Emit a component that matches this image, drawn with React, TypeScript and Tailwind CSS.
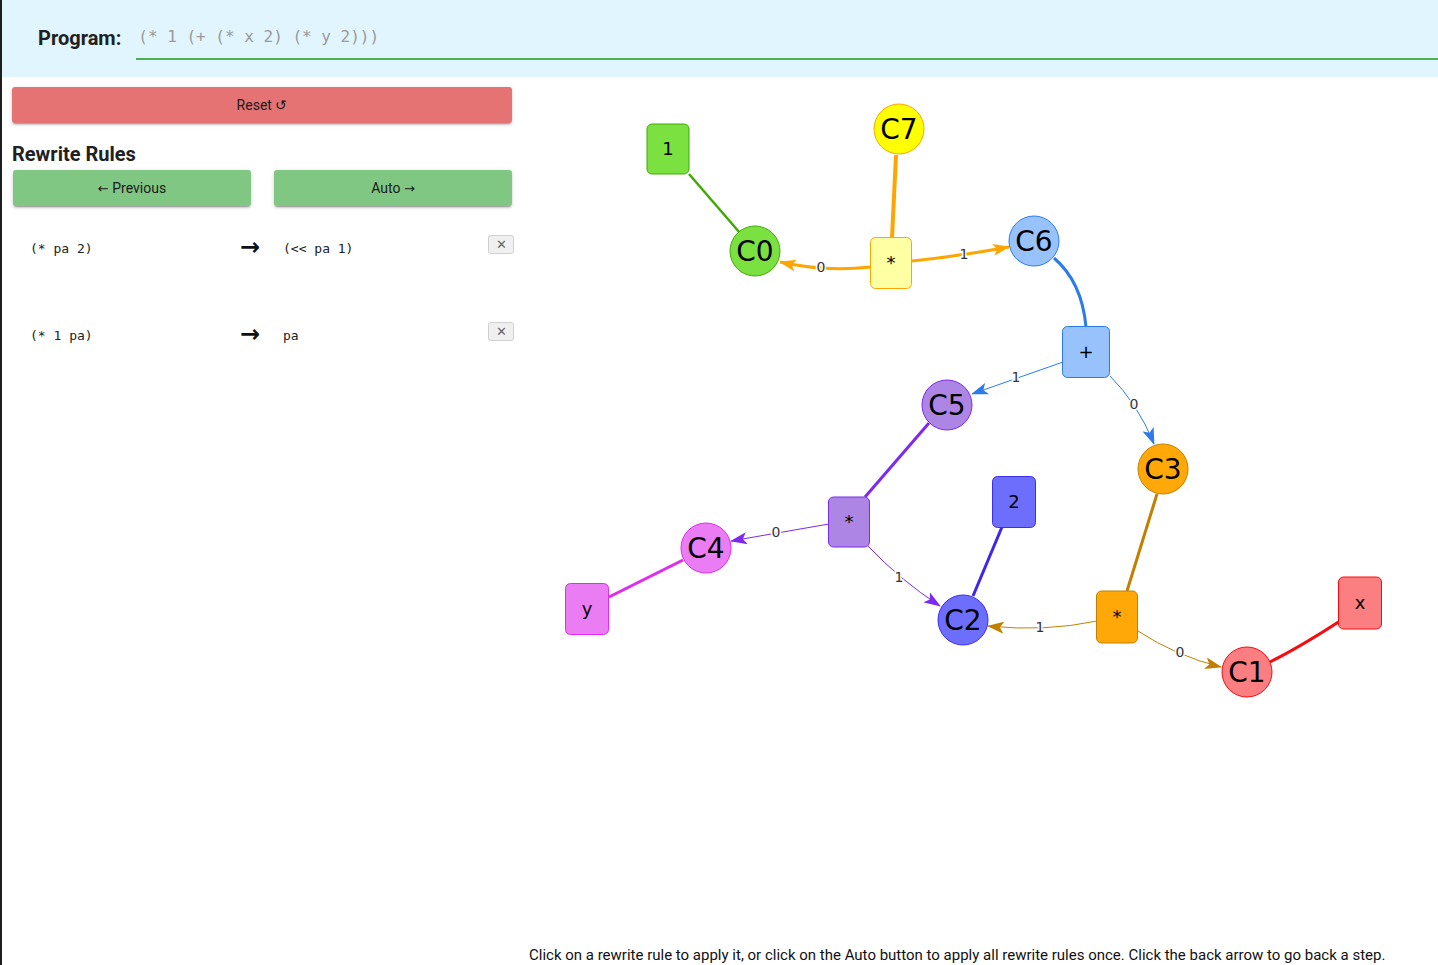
import React from 'react';

const shadow = 'shadow-[0px_3px_1px_-2px_rgba(0,0,0,0.2),0px_2px_2px_0px_rgba(0,0,0,0.14),0px_1px_5px_0px_rgba(0,0,0,0.12)]';

type GNode = { id: string; label: string; x: number; y: number; shape: 'circle' | 'box'; fill: string; stroke: string; w?: number; h?: number };

const nodes: GNode[] = [
    { id: 'n1', label: '1', x: 668, y: 149, shape: 'box', fill: '#7BE141', stroke: '#41A906', w: 42, h: 50 },
    { id: 'c7', label: 'C7', x: 899, y: 129, shape: 'circle', fill: '#FFFF00', stroke: '#FFA500' },
    { id: 'c0', label: 'C0', x: 755, y: 251, shape: 'circle', fill: '#7BE141', stroke: '#41A906' },
    { id: 'my', label: '*', x: 891, y: 263, shape: 'box', fill: '#FFFFA3', stroke: '#FFA500', w: 41, h: 51 },
    { id: 'c6', label: 'C6', x: 1034, y: 241, shape: 'circle', fill: '#97C2FC', stroke: '#2B7CE9' },
    { id: 'pl', label: '+', x: 1086, y: 352, shape: 'box', fill: '#97C2FC', stroke: '#2B7CE9', w: 47, h: 51 },
    { id: 'c5', label: 'C5', x: 947, y: 405, shape: 'circle', fill: '#AD85E4', stroke: '#7C29F0' },
    { id: 'c3', label: 'C3', x: 1163, y: 469, shape: 'circle', fill: '#FFA807', stroke: '#C37F00' },
    { id: 'n2', label: '2', x: 1014, y: 502, shape: 'box', fill: '#6E6EFD', stroke: '#3d2df0', w: 43, h: 51 },
    { id: 'mp', label: '*', x: 849, y: 522, shape: 'box', fill: '#AD85E4', stroke: '#7C29F0', w: 41, h: 50 },
    { id: 'c4', label: 'C4', x: 706, y: 548, shape: 'circle', fill: '#EB7DF4', stroke: '#E129F0' },
    { id: 'ny', label: 'y', x: 587, y: 609, shape: 'box', fill: '#EB7DF4', stroke: '#E129F0', w: 43, h: 51 },
    { id: 'c2', label: 'C2', x: 963, y: 620, shape: 'circle', fill: '#6E6EFD', stroke: '#3d2df0' },
    { id: 'mo', label: '*', x: 1117, y: 617, shape: 'box', fill: '#FFA807', stroke: '#C37F00', w: 41, h: 52 },
    { id: 'c1', label: 'C1', x: 1247, y: 672, shape: 'circle', fill: '#FB7E81', stroke: '#FA0A10' },
    { id: 'nx', label: 'x', x: 1360, y: 603, shape: 'box', fill: '#FB7E81', stroke: '#FA0A10', w: 43, h: 52 },
];

type GEdge = { d: string; color: string; width: number; arrow?: string; label?: string; lx?: number; ly?: number };

const edges: GEdge[] = [
    { d: 'M689,174 L740,233', color: '#41A906', width: 2.5 },
    { d: 'M896,155 L892,238', color: '#FFA500', width: 4 },
    { d: 'M1054,258 Q1082,282 1086,327', color: '#2B7CE9', width: 3 },
    { d: 'M929,423 L865,497', color: '#7C29F0', width: 3 },
    { d: 'M1002,527 L973,596', color: '#3d24f0', width: 3 },
    { d: 'M1157,494 L1127,591', color: '#C37F00', width: 3 },
    { d: 'M609,597 L683,560', color: '#E129F0', width: 3 },
    { d: 'M1340,621 Q1300,647 1270,662', color: '#FA0A10', width: 3 },
    { d: 'M871,267 Q824,272 780,262', color: '#FFA500', width: 3, arrow: 'ao', label: '0', lx: 821, ly: 267 },
    { d: 'M912,261 Q960,256 1009,247', color: '#FFA500', width: 3, arrow: 'ao', label: '1', lx: 964, ly: 254 },
    { d: 'M1063,362 L972,394', color: '#2B7CE9', width: 1, arrow: 'ab', label: '1', lx: 1016, ly: 377 },
    { d: 'M1110,376 Q1138,404 1154,444', color: '#2B7CE9', width: 1, arrow: 'ab', label: '0', lx: 1134, ly: 404 },
    { d: 'M829,524 L731,541', color: '#7C29F0', width: 1, arrow: 'ap', label: '0', lx: 776, ly: 532 },
    { d: 'M868,546 Q900,580 940,606', color: '#7C29F0', width: 1, arrow: 'ap', label: '1', lx: 899, ly: 577 },
    { d: 'M1097,621 Q1045,632 988,626', color: '#C37F00', width: 1, arrow: 'ak', label: '1', lx: 1040, ly: 627 },
    { d: 'M1138,631 Q1176,656 1221,667', color: '#C37F00', width: 1, arrow: 'ak', label: '0', lx: 1180, ly: 652 },
];

const markers: [string, string][] = [['ao', '#FFA500'], ['ab', '#2B7CE9'], ['ap', '#7C29F0'], ['ak', '#C37F00']];

function Graph() {
    return (
        <svg width={926} height={868} viewBox="512 77 926 868" className="block" style={{ fontFamily: '"DejaVu Sans", sans-serif' }}>
            <defs>
                {markers.map(([id, c]) => (
                    <marker key={id} id={id} viewBox="0 0 17 12" refX={16} refY={6} markerWidth={17} markerHeight={12} markerUnits="userSpaceOnUse" orient="auto">
                        <path d="M0,0 L17,6 L0,12 L4,6 Z" fill={c} />
                    </marker>
                ))}
            </defs>
            {edges.map((e, i) => (
                <path key={i} d={e.d} fill="none" stroke={e.color} strokeWidth={e.width} markerEnd={e.arrow ? `url(#${e.arrow})` : undefined} />
            ))}
            {edges.filter(e => e.label).map((e, i) => (
                <text key={i} x={e.lx} y={e.ly} textAnchor="middle" dominantBaseline="central" fontSize={14} fill="#343434" stroke="#ffffff" strokeWidth={3} paintOrder="stroke">
                    {e.label}
                </text>
            ))}
            {nodes.map(n => (
                <g key={n.id}>
                    {n.shape === 'circle' ? (
                        <circle cx={n.x} cy={n.y} r={25} fill={n.fill} stroke={n.stroke} strokeWidth={1} />
                    ) : (
                        <rect x={n.x - (n.w ?? 42) / 2} y={n.y - (n.h ?? 50) / 2} width={n.w} height={n.h} rx={5} fill={n.fill} stroke={n.stroke} strokeWidth={1} />
                    )}
                    <text x={n.x} y={n.shape === 'circle' ? n.y : n.y - 1} textAnchor="middle" dominantBaseline="central" fontSize={n.shape === 'circle' ? 28 : 18} fill="#000">
                        {n.label}
                    </text>
                </g>
            ))}
        </svg>
    );
}

function RuleRow({ from, to }: { from: string; to: string }) {
    return (
        <div className="flex h-[26px] items-center">
            <span className="ml-[18px] mt-[2px] w-[210px] font-['DejaVu_Sans_Mono',monospace] text-[13px] text-[#222]">{from}</span>
            <span className="w-[43px] font-['DejaVu_Sans',sans-serif] text-[24px] font-bold leading-none text-[#111] -mt-[2px]">→</span>
            <span className="mt-[2px] flex-1 font-['DejaVu_Sans_Mono',monospace] text-[13px] text-[#222]">{to}</span>
            <button className="-mr-[2px] h-[19px] w-[26px] self-start rounded-[3px] border border-[#cfcfcf] bg-[#f0f0f0] text-[13px] leading-none text-[#666]">
                ✕
            </button>
        </div>
    );
}

const Arrow = ({ c }: { c: string }) => <span className="font-['DejaVu_Sans',sans-serif] text-[13px]">{c}</span>;

export default function App() {
    return (
        <div className="flex h-screen flex-col overflow-hidden border-l-2 border-[#1e1e1e] bg-white font-['Roboto',sans-serif] text-[#222]">
            {/* Header */}
            <header className="flex h-[77px] shrink-0 items-start bg-[#e1f5fe] pl-9">
                <div className="mt-[26px] text-xl font-bold leading-6 text-[#212121]">Program:</div>
                <div className="ml-[15px] mt-[25px] h-[35px] flex-1 border-b-2 border-[#4caf50]">
                    <span className="pl-[2px] font-['DejaVu_Sans_Mono',monospace] text-[16px] leading-6 text-[#9a9a9a]">(* 1 (+ (* x 2) (* y 2)))</span>
                </div>
            </header>

            <div className="flex min-h-0 flex-1">
                {/* Left panel */}
                <aside className="w-[510px] shrink-0 pl-[10px] pt-[10px]">
                    <button className={`h-9 w-full rounded-[3px] bg-[#e57373] text-sm text-[#1a1a1a] ${shadow}`}>Reset ↺</button>
                    <h2 className="mt-[19px] text-xl font-bold leading-6 text-[#212121]">Rewrite Rules</h2>
                    <div className="mt-1 grid grid-cols-2 gap-[23px] pl-[1px]">
                        <button className={`h-9 rounded-[3px] bg-[#81c784] text-sm text-[#1a1a1a] ${shadow}`}>
                            <Arrow c="←" /> Previous
                        </button>
                        <button className={`h-9 rounded-[3px] bg-[#81c784] text-sm text-[#1a1a1a] ${shadow}`}>
                            Auto <Arrow c="→" />
                        </button>
                    </div>
                    <div className="mt-[29px] flex flex-col gap-[61px]">
                        <RuleRow from="(* pa 2)" to="(<< pa 1)" />
                        <RuleRow from="(* 1 pa)" to="pa" />
                    </div>
                </aside>

                {/* Graph */}
                <div className="flex flex-1 flex-col">
                    <Graph />
                    <p className="pl-[17px] text-[15px] leading-5 text-[#111]">
                        Click on a rewrite rule to apply it, or click on the Auto button to apply all rewrite rules once. Click the back arrow to go back a step.
                    </p>
                </div>
            </div>
        </div>
    );
}
